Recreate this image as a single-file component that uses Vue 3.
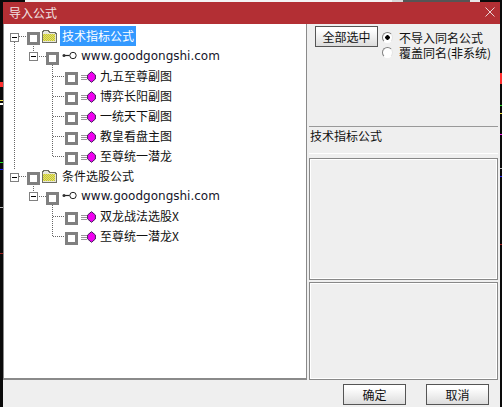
<script setup>
const leaves1 = ['九五至尊副图', '博弈长阳副图', '一统天下副图', '教皇看盘主图', '至尊统一潜龙']
const leaves2 = ['双龙战法选股X', '至尊统一潜龙X']
const groups = [
  { name: '技术指标公式', selected: true, leaves: leaves1 },
  { name: '条件选股公式', selected: false, leaves: leaves2 },
]
</script>

<template>
  <div class="screen">
    <div class="dialog">
      <header class="titlebar">
        <span class="title">导入公式</span>
        <svg class="close" width="10" height="10" viewBox="0 0 10 10">
          <path d="M0.5 0.5L9.5 9.5M9.5 0.5L0.5 9.5" stroke="#e8d4d4" stroke-width="1" fill="none" />
        </svg>
      </header>
      <div class="main">
        <section class="tree">
          <svg class="lines" width="120" height="250" viewBox="0 0 120 250">
            <g stroke="#666" stroke-width="1" stroke-dasharray="1 1" fill="none">
              <path d="M10.5 18V146M15 12.5H23M29.5 22V28M33 32.5H42M48.5 41V132.5M49 52.5H61M49 72.5H61M49 92.5H61M49 112.5H61M49 132.5H61" />
              <path d="M15 152.5H23M29.5 162V168M33 172.5H42M48.5 181V212.5M49 192.5H61M49 212.5H61" />
            </g>
          </svg>
          <template v-for="g in groups" :key="g.name">
            <div class="row lvl0">
              <span class="exp"></span>
              <span class="check"></span>
              <svg class="folder" width="16" height="14" viewBox="0 0 16 14" shape-rendering="crispEdges">
                <defs>
                  <pattern id="dither" width="2" height="2" patternUnits="userSpaceOnUse">
                    <rect width="2" height="2" fill="#f6f24a" />
                    <rect width="1" height="1" fill="#b4b45a" />
                    <rect x="1" y="1" width="1" height="1" fill="#b4b45a" />
                  </pattern>
                </defs>
                <path d="M1 13V2H2V1H7V2H8V3H14V4H15V13Z" fill="#e6e6dc" />
                <path d="M1 13V2H2V1H7V2H8V3H14V4H15V13Z" fill="none" stroke="#6e6e62" stroke-width="1" />
                <rect x="2" y="5" width="12" height="7" fill="url(#dither)" />
              </svg>
              <span class="label" :class="{ selected: g.selected }">{{ g.name }}</span>
            </div>
            <div class="row lvl1">
              <span class="exp"></span>
              <span class="check"></span>
              <svg class="key" width="16" height="10" viewBox="0 0 16 10">
                <circle cx="11" cy="4.5" r="3.2" fill="#fff" stroke="#222" />
                <path d="M7.5 4.5H2" stroke="#222" stroke-width="1.2" fill="none" />
                <circle cx="2" cy="4.5" r="1.5" fill="#333" />
              </svg>
              <span class="url">www.goodgongshi.com</span>
            </div>
            <div v-for="l in g.leaves" :key="l" class="row lvl2">
              <span class="check"></span>
              <svg class="leaf" width="15" height="12" viewBox="0 0 15 12">
                <path d="M0 4.5H6M0 6.5H6M0 8.5H6" stroke="#999" stroke-width="1" />
                <path d="M10.5 0.7L14.4 4V8L10.5 11.3L6.6 8V4Z" fill="#f000f0" stroke="#40205a" />
              </svg>
              <span class="label">{{ l }}</span>
            </div>
          </template>
        </section>
        <aside class="side">
          <div class="controls">
            <button class="btn select-all">全部选中</button>
            <div class="radios">
              <label class="radio"><span class="dot on"></span>不导入同名公式</label>
              <label class="radio"><span class="dot"></span>覆盖同名(非系统)</label>
            </div>
          </div>
          <div class="info">技术指标公式</div>
          <div class="box box-a"></div>
          <div class="box box-b"></div>
        </aside>
      </div>
      <footer class="footer">
        <button class="btn">确定</button>
        <button class="btn">取消</button>
      </footer>
    </div>
  </div>
</template>

<style>
html, body { margin: 0; background: #0a0a0a; overflow: hidden; }
</style>

<style scoped>
.screen {
  width: 502px;
  height: 407px;
  box-sizing: border-box;
  padding: 2px 2px 0 3px;
  background:
    linear-gradient(#ff3030, #ff3030) 0 82px / 3px 5px no-repeat,
    linear-gradient(#f0e040, #f0e040) 0 100px / 3px 1px no-repeat,
    linear-gradient(#fff, #fff) 0 103px / 3px 2px no-repeat,
    linear-gradient(#20e020, #20e020) 0 162px / 3px 1px no-repeat,
    linear-gradient(#2020f0, #2020f0) 0 169px / 3px 1px no-repeat,
    linear-gradient(#bbb, #bbb) 0 207px / 3px 1px no-repeat,
    linear-gradient(#a02020, #a02020) 0 253px / 3px 1px no-repeat,
    linear-gradient(#ff3030, #ff3030) 500px 73px / 2px 11px no-repeat,
    linear-gradient(#20e020, #20e020) 500px 105px / 2px 1px no-repeat,
    linear-gradient(#f0e040, #f0e040) 500px 113px / 2px 1px no-repeat,
    linear-gradient(#f020f0, #f020f0) 500px 134px / 2px 1px no-repeat,
    linear-gradient(#bbb, #bbb) 500px 168px / 2px 1px no-repeat,
    linear-gradient(#2020f0, #2020f0) 500px 176px / 2px 1px no-repeat,
    linear-gradient(#a02020, #a02020) 500px 244px / 2px 1px no-repeat,
    linear-gradient(#f4f4f4, #f4f4f4) 25px 0 / 367px 2px no-repeat,
    linear-gradient(#d8d8d8, #d8d8d8) 392px 0 / 11px 2px no-repeat,
    linear-gradient(#555, #555) 403px 0 / 67px 2px no-repeat,
    linear-gradient(#e8e8e8, #e8e8e8) 470px 0 / 10px 2px no-repeat,
    #0a0a0a;
  font-family: "Noto Sans CJK SC", "DejaVu Sans", sans-serif;
  font-size: 12px;
  color: #111;
}
.dialog {
  height: 405px;
  display: flex;
  flex-direction: column;
  background: #efefef;
}
.titlebar {
  height: 22px;
  flex: none;
  display: flex;
  align-items: center;
  justify-content: space-between;
  padding: 0 5px 0 6px;
  background: #b32f34;
  color: #f2e4e4;
}
.title { line-height: 22px; }
.close { margin-top: -2px; }
.main {
  height: 356px;
  flex: none;
  display: flex;
}
.tree {
  position: relative;
  width: 304px;
  flex: none;
  box-sizing: border-box;
  border-left: 1px solid #8a8a8a;
  border-right: 1px solid #8a8a8a;
  border-bottom: 2px solid #8a8a8a;
  background: #fff;
  padding-top: 2px;
}
.lines { position: absolute; left: 0; top: 0; }
.row {
  position: relative;
  height: 20px;
  display: flex;
  align-items: center;
}
.lvl0 { padding-left: 6px; }
.lvl1 { padding-left: 25px; }
.lvl2 { padding-left: 61px; }
.exp {
  width: 9px;
  height: 9px;
  box-sizing: border-box;
  border: 1px solid #808080;
  background: linear-gradient(#000, #000) center / 5px 1px no-repeat #fff;
  flex: none;
}
.lvl0 .exp { margin: 2px 8px 0 0; }
.lvl1 .exp { margin-right: 8px; }
.check {
  width: 13px;
  height: 13px;
  box-sizing: border-box;
  border: 3px solid #808080;
  background: #fff;
  flex: none;
  margin-top: 5px;
}
.folder { flex: none; margin-left: 1px; }
.label {
  margin-left: 3px;
  padding: 0 2px;
  line-height: 20px;
  white-space: nowrap;
  color: #111;
}
.lvl2 .label { margin-left: 2px; }
.label.selected { background: #3399ff; color: #fff; }
.key { margin-left: 3px; flex: none; }
.url {
  margin-left: 3px;
  font-family: "DejaVu Sans", sans-serif;
  font-size: 12px;
  white-space: nowrap;
  color: #15152a;
}
.leaf { margin: 1px 0 0 3px; flex: none; }
.side {
  flex: 1;
  min-width: 0;
  padding: 2px 2px 0 2px;
}
.controls {
  height: 100px;
  display: flex;
  align-items: flex-start;
  padding-left: 6px;
}
.btn {
  width: 63px;
  height: 21px;
  padding: 0;
  box-sizing: border-box;
  border: 1px solid #555;
  background: linear-gradient(#fff 0, #fff 15%, #f1f1f1 50%, #dcdcdc 100%);
  font: inherit;
  color: #111;
}
.select-all { flex: none; }
.radios {
  margin-left: 4px;
  padding-top: 4px;
}
.radio {
  height: 15px;
  line-height: 15px;
  display: flex;
  align-items: center;
  white-space: nowrap;
}
.dot {
  width: 11px;
  height: 11px;
  box-sizing: border-box;
  border: 1px solid;
  border-color: #808080 #e4e4e4 #fff #808080;
  border-radius: 50%;
  background: #fff;
  margin-right: 6px;
  flex: none;
}
.dot.on { background: radial-gradient(circle, #000 0, #000 2px, #fff 2.5px); }
.info {
  height: 28px;
  box-sizing: border-box;
  border-top: 1px solid #999;
  border-bottom: 1px solid #fff;
  margin-bottom: 4px;
  padding-left: 1px;
  line-height: 18px;
}
.box {
  box-sizing: border-box;
  border: 1px solid #888;
  outline: 1px solid #fff;
  outline-offset: -2px;
}
.box-a { height: 122px; margin-bottom: 2px; }
.box-b { height: 98px; }
.footer {
  height: 27px;
  flex: none;
  display: flex;
  justify-content: flex-end;
  gap: 20px;
  padding: 4px 11px 0 0;
  box-sizing: border-box;
}
</style>
